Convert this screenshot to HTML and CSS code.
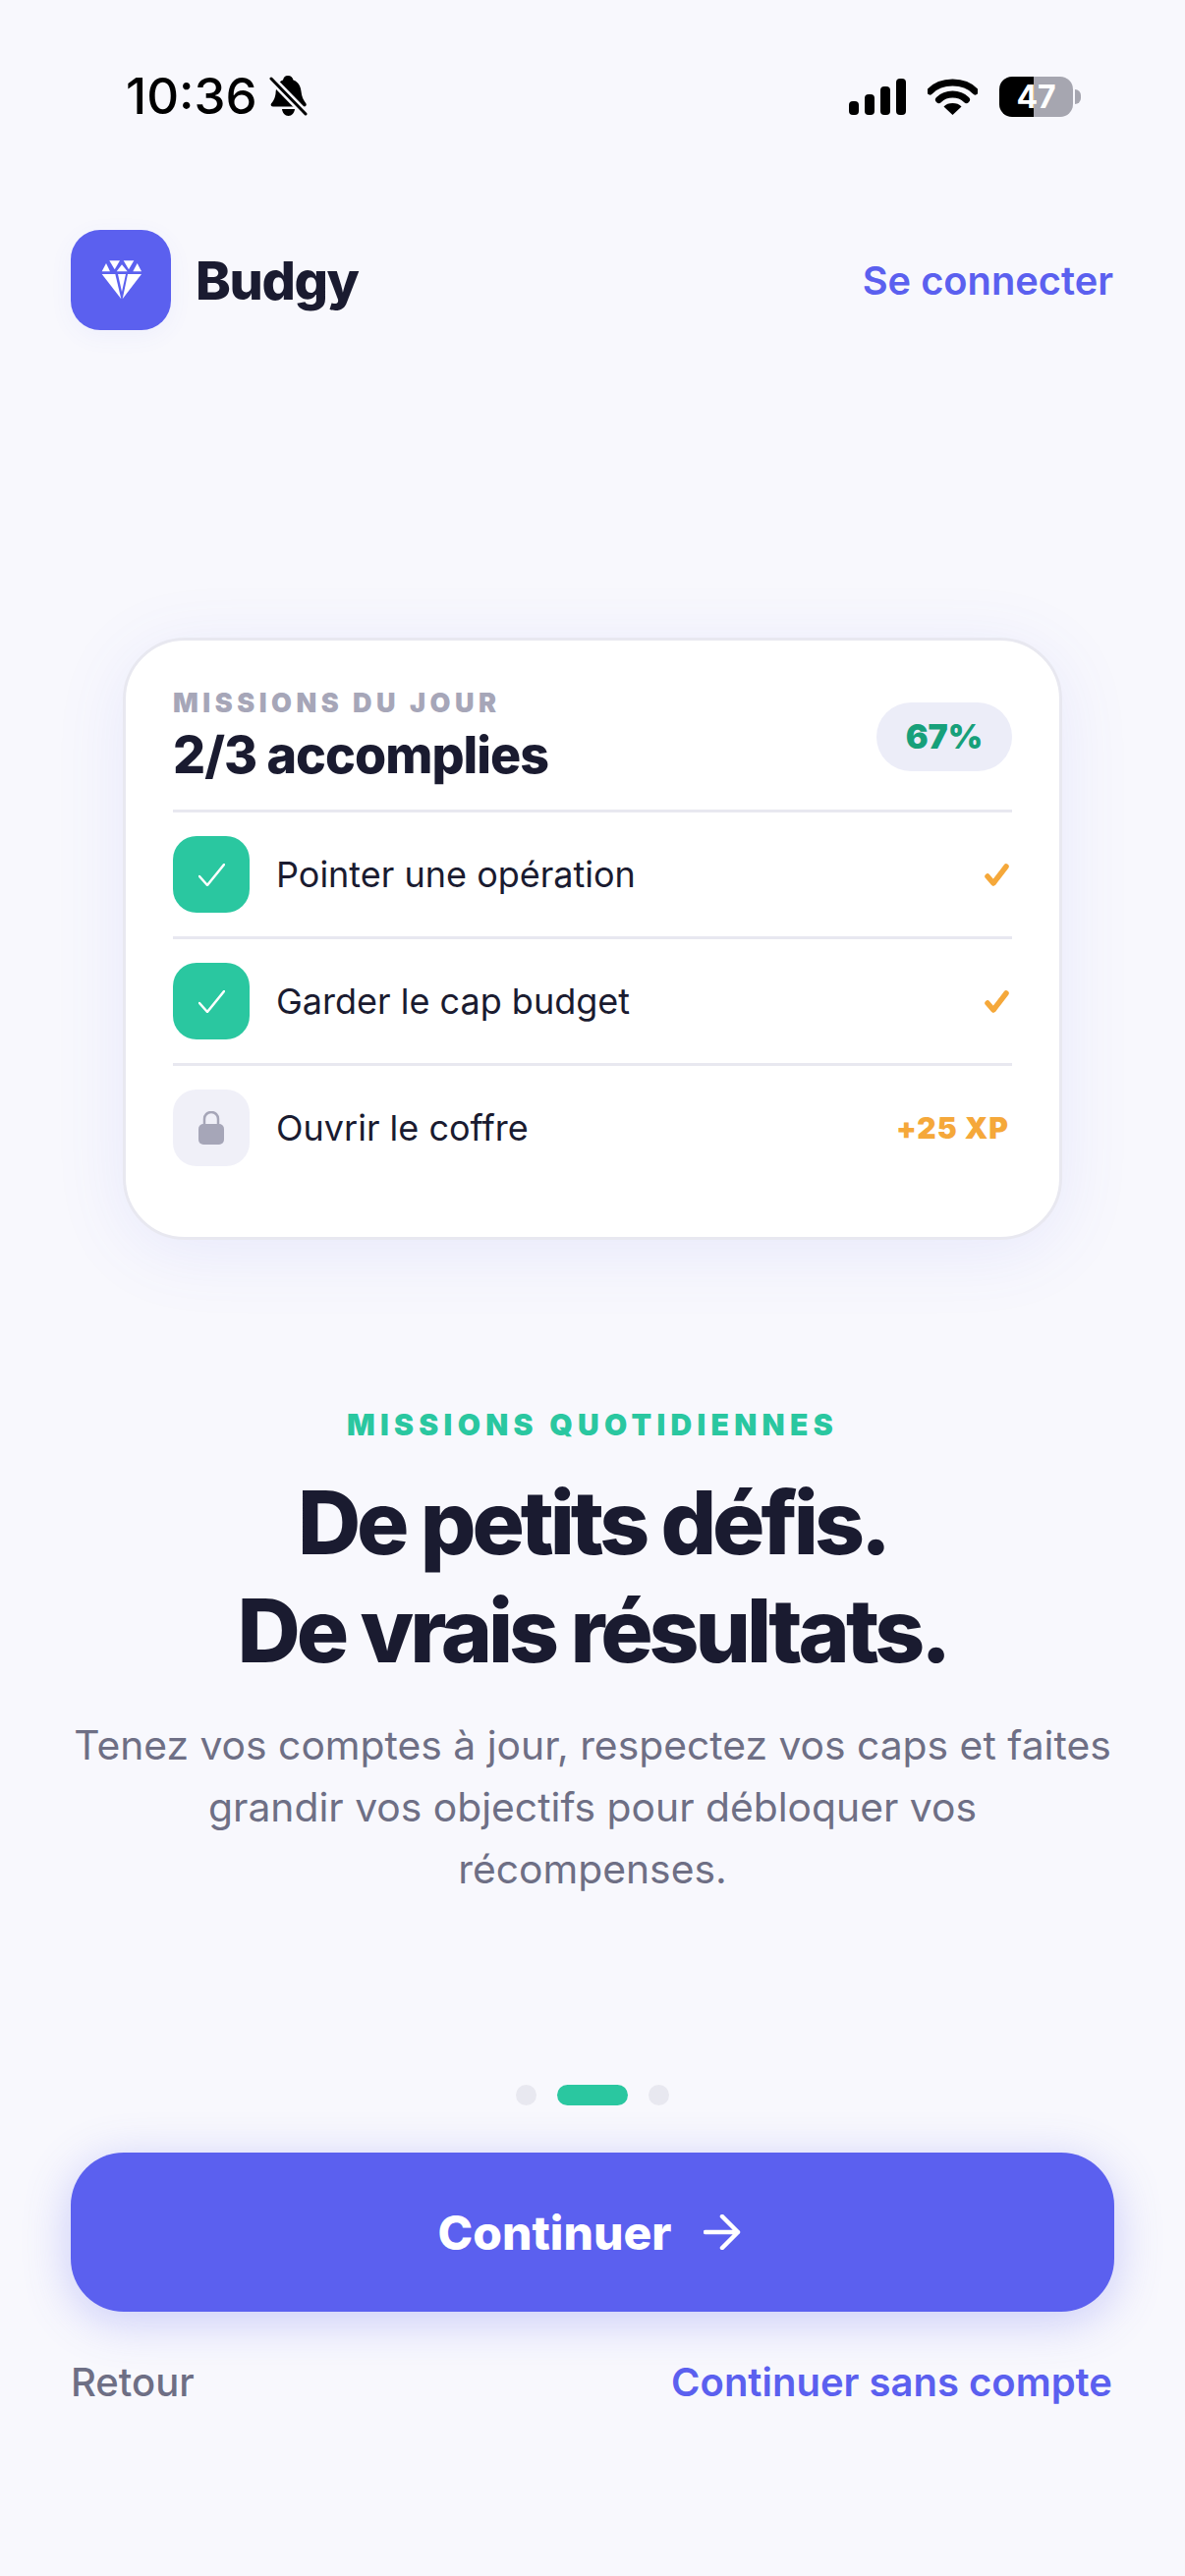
FILE: index.html
```html
<!DOCTYPE html>
<html lang="fr">
<head>
	<meta charset="UTF-8">
	<title>Budgy</title>
	<link rel="stylesheet" href="styles.css">
</head>
<body>
<div id="screen">
	<div class="status">
		<div class="status-left">
			<span class="time">10:36</span>
			<svg class="bell" viewBox="0 0 39 42" width="39" height="42">
				<path d="M19 0c3 0 5 2 5.500 4.500C30 6.500 32 11 32.500 16c.5 5 2 8.500 5 12.500.8 1.500-.2 3-2 3H4c-2 0-3-1.500-2-3 3-3.500 4-6.500 4.500-10C7 11 9 6.500 14 4.500 14.500 2 16 0 19 0z"/>
				<path d="M13 34h13c-.5 4-3 7-6.500 7S13.500 38 13 34z"/>
				<path d="M2 3l35 36" stroke="#f8f8fd" stroke-width="8" fill="none"/>
				<path d="M2 3l35 36" stroke="#000" stroke-width="3" stroke-linecap="round" fill="none"/>
			</svg>
		</div>
		<div class="status-right">
			<div class="signal">
				<span class="bar b1"></span>
				<span class="bar b2"></span>
				<span class="bar b3"></span>
				<span class="bar b4"></span>
			</div>
			<svg class="wifi" viewBox="0 0 51 37" width="51" height="37">
				<path d="M2.500 13C8 7 16 4 25.500 4S43 7 48.500 13" stroke="#000" stroke-width="7" stroke-linecap="round" fill="none"/>
				<path d="M11.500 21.500C15 18 20 16 25.500 16s10.500 2 14 5.500" stroke="#000" stroke-width="7" stroke-linecap="round" fill="none"/>
				<path d="M25.500 37l-9-8.500c2-2.500 5.500-3.500 9-3.500s7 1 9 3.500z"/>
			</svg>
			<div class="battery">47</div>
		</div>
	</div>

	<div class="topbar">
		<div class="brand">
			<div class="logo">
				<svg viewBox="0 0 41 40" width="41" height="40" fill="#fff">
					<polygon points="5,3 .7,11.300 9,11.300"/>
					<polygon points="8.300,.3 19,.3 13.700,9.300"/>
					<polygon points="21,4.300 15.700,11.300 26.700,11.300"/>
					<polygon points="22.700,.3 33.300,.3 28,9.300"/>
					<polygon points="36.700,3 32.300,11.300 41,11.300"/>
					<polygon points=".7,14 14.300,14 20.300,39.300"/>
					<polygon points="17,14 25,14 21,32"/>
					<polygon points="27,14 41,14 21.700,39.300"/>
				</svg>
			</div>
			<span class="brand-name">Budgy</span>
		</div>
		<a class="login">Se connecter</a>
	</div>

	<div class="card">
		<div class="card-head">
			<div>
				<div class="card-label">MISSIONS DU JOUR</div>
				<div class="card-title">2/3 accomplies</div>
			</div>
			<div class="pill">67%</div>
		</div>
		<div class="row">
			<div class="tick green">
				<svg viewBox="0 0 27 23" width="27" height="23"><polyline points="1,13 9,22 26,1" fill="none" stroke="#fff" stroke-width="2.500" stroke-linecap="round" stroke-linejoin="round"/></svg>
			</div>
			<span class="row-name">Pointer une opération</span>
			<svg class="done" viewBox="0 0 25 23" width="25" height="23"><polyline points="3,13 9,20 22,3" fill="none" stroke="#f5a83a" stroke-width="5.500" stroke-linecap="round" stroke-linejoin="round"/></svg>
		</div>
		<div class="row">
			<div class="tick green">
				<svg viewBox="0 0 27 23" width="27" height="23"><polyline points="1,13 9,22 26,1" fill="none" stroke="#fff" stroke-width="2.500" stroke-linecap="round" stroke-linejoin="round"/></svg>
			</div>
			<span class="row-name">Garder le cap budget</span>
			<svg class="done" viewBox="0 0 25 23" width="25" height="23"><polyline points="3,13 9,20 22,3" fill="none" stroke="#f5a83a" stroke-width="5.500" stroke-linecap="round" stroke-linejoin="round"/></svg>
		</div>
		<div class="row">
			<div class="tick grey">
				<svg viewBox="0 0 26 34" width="26" height="34">
					<path d="M6 14V8c0-4 3-7 7-7s7 3 7 7v6" fill="none" stroke="#a6a6b8" stroke-width="2.500"/>
					<rect y="13" width="26" height="21" rx="5" fill="#a6a6b8"/>
				</svg>
			</div>
			<span class="row-name">Ouvrir le coffre</span>
			<span class="xp">+25 XP</span>
		</div>
	</div>

	<div class="copy">
		<div class="eyebrow">MISSIONS QUOTIDIENNES</div>
		<h1>De petits défis.<br>De vrais résultats.</h1>
		<p>Tenez vos comptes à jour, respectez vos caps et faites grandir vos objectifs pour débloquer vos récompenses.</p>
	</div>

	<div class="dots">
		<span class="dot"></span>
		<span class="dot active"></span>
		<span class="dot"></span>
	</div>

	<button class="cta">
		<span>Continuer</span>
		<svg viewBox="0 0 38 36" width="38" height="36"><path d="M2 18h33M19 2l16 16-16 16" fill="none" stroke="#fff" stroke-width="4.500" stroke-linecap="round" stroke-linejoin="round"/></svg>
	</button>

	<div class="links">
		<a class="back">Retour</a>
		<a class="skip">Continuer sans compte</a>
	</div>
</div>
</body>
</html>
```

FILE: styles.css
```css
*{margin: 0;padding: 0;box-sizing: border-box;}
html,body{
	width: 1206px;
	height: 2622px;
	overflow: hidden;
}
body{
	background: #f8f8fd;
	font-family: Inter, "Liberation Sans", sans-serif;
	color: #1a1b30;
}
#screen{
	display: flex;
	flex-direction: column;
	height: 100%;
	padding: 0 72px;
}

/* status bar */
.status{
	display: flex;
	justify-content: space-between;
	align-items: center;
	height: 42px;
	margin-top: 77px;
	padding: 0 42px 0 56px;
	color: #000;
}
.status-left{
	display: flex;
	align-items: center;
	gap: 12px;
}
.time{
	font-size: 51px;
	font-weight: 500;
	line-height: 42px;
}
.status-right{
	display: flex;
	align-items: center;
	gap: 22px;
}
.signal{
	display: flex;
	align-items: flex-end;
	gap: 6px;
	height: 37px;
}
.bar{
	width: 10px;
	background: #000;
	border-radius: 4px;
}
.b1{height: 14px;}
.b2{height: 21px;}
.b3{height: 29px;}
.b4{height: 37px;}
.battery{
	position: relative;
	width: 75px;
	height: 41px;
	border-radius: 13px;
	background: linear-gradient(90deg,#000 0,#000 35px,#a6a6b0 35px);
	color: #fff;
	font-size: 32px;
	font-weight: 700;
	line-height: 41px;
	text-align: center;
}
.battery:after{
	content: '';
	position: absolute;
	left: 77px;
	top: 13px;
	width: 6px;
	height: 15px;
	background: #a6a6b0;
	border-radius: 0 8px 8px 0;
}

/* header */
.topbar{
	display: flex;
	justify-content: space-between;
	align-items: center;
	margin-top: 115px;
}
.brand{
	display: flex;
	align-items: center;
	gap: 25px;
}
.logo{
	display: flex;
	align-items: center;
	justify-content: center;
	width: 102px;
	height: 102px;
	border-radius: 30px;
	background: #5b60ef;
	box-shadow: 0 6px 24px rgba(91,96,239,.06);
}
.brand-name{
	font-size: 54px;
	font-weight: 800;
	letter-spacing: -1.400px;
}
.login{
	margin-right: 1px;
	font-size: 39.800px;
	font-weight: 600;
	color: #5b60ef;
}

/* card */
.card{
	margin: 313px 53px 0;
	padding: 48px 48px 48px;
	height: 613px;
	background: #fff;
	border: 3px solid #e8e8f0;
	border-radius: 63px;
	box-shadow: 0 12px 72px rgba(91,96,239,.1);
}
.card-head{
	display: flex;
	justify-content: space-between;
	align-items: center;
	height: 124px;
	padding-bottom: 25px;
}
.card-label{
	font-size: 27px;
	font-weight: 900;
	line-height: 31px;
	letter-spacing: 4.500px;
	color: #a6a6b8;
}
.card-title{
	margin-top: 7px;
	font-size: 52px;
	font-weight: 800;
	line-height: 62px;
	letter-spacing: -1px;
}
.pill{
	width: 138px;
	height: 70px;
	border-radius: 35px;
	background: #ecedf8;
	color: #17a07a;
	font-size: 34px;
	font-weight: 900;
	line-height: 70px;
	text-align: center;
}
.row{
	display: flex;
	align-items: center;
	height: 129px;
	border-top: 3px solid #e8e8f0;
}
.tick{
	display: flex;
	align-items: center;
	justify-content: center;
	width: 78px;
	height: 78px;
	border-radius: 24px;
	margin-right: 27px;
}
.green{background: #2ac7a0;}
.grey{background: #f0f0f8;}
.row-name{
	flex: 1;
	font-size: 36px;
}
.done{
	margin-right: 3px;
}
.xp{
	font-size: 30px;
	font-weight: 900;
	letter-spacing: 1px;
	color: #f5a83a;
	margin-right: 3px;
}

/* text block */
.copy{
	margin-top: 172px;
	text-align: center;
}
.eyebrow{
	font-size: 30px;
	font-weight: 900;
	line-height: 33px;
	letter-spacing: 5.300px;
	color: #2ac7a0;
}
h1{
	margin-top: 28px;
	font-size: 89px;
	font-weight: 800;
	line-height: 110px;
	letter-spacing: -4.100px;
}
p{
	margin-top: 30px;
	padding: 0 1px;
	font-size: 40.800px;
	line-height: 63px;
	color: #6e6f85;
}

/* bottom */
.dots{
	display: flex;
	justify-content: center;
	gap: 21px;
	margin-top: 188px;
}
.dot{
	width: 21px;
	height: 21px;
	border-radius: 50%;
	background: #e8e8f0;
}
.dot.active{
	width: 72px;
	border-radius: 11px;
	background: #2ac7a0;
}
.cta{
	display: flex;
	align-items: center;
	justify-content: center;
	flex: none;
	gap: 33px;
	height: 162px;
	margin-top: 48px;
	padding-right: 6px;
	border: none;
	border-radius: 54px;
	background: #5b60ef;
	color: #fff;
	font-family: inherit;
	font-size: 48px;
	font-weight: 800;
	box-shadow: 0 9px 48px rgba(91,96,239,.3);
}
.links{
	display: flex;
	justify-content: space-between;
	align-items: center;
	margin-top: 47px;
	padding-right: 2px;
	font-size: 40px;
}
.back{
	font-weight: 500;
	color: #6e6f85;
}
.skip{
	font-weight: 600;
	color: #5b60ef;
}
```
